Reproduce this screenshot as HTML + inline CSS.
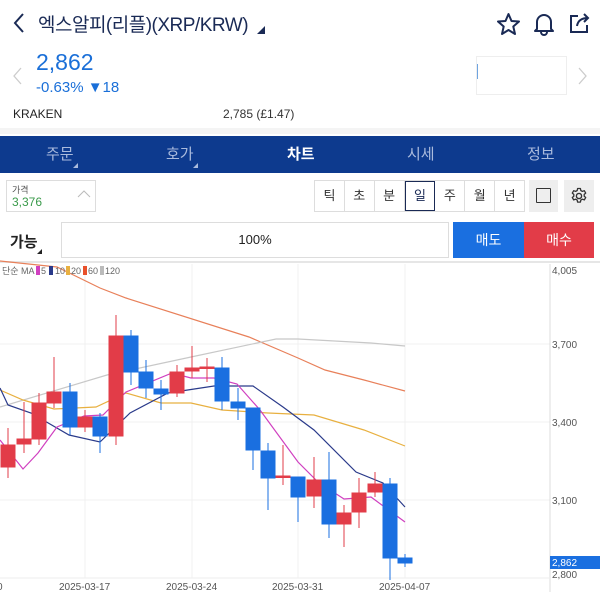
<!DOCTYPE html>
<html><head><meta charset="utf-8"><style>
*{margin:0;padding:0;box-sizing:border-box}
body{width:600px;height:592px;overflow:hidden;background:#fff;font-family:"Liberation Sans","Noto Sans CJK KR",sans-serif;position:relative;color:#222}
.a{position:absolute}
</style></head><body>
<svg class="a" style="left:12px;top:12px" width="14" height="22"><path d="M11 2 L3 11 L11 20" stroke="#1a2a55" stroke-width="2" fill="none"/></svg>
<div class="a" style="left:38px;top:10px;font-size:19px;color:#1a2a55;letter-spacing:-0.5px">엑스알피(리플)(XRP/KRW)</div>
<div class="a" style="left:257px;top:26px;width:0;height:0;border-left:8px solid transparent;border-bottom:8px solid #1a2a55"></div>
<svg class="a" style="left:496px;top:12px" width="26" height="24"><path d="M12.5 2 L15.5 9 L23 9.5 L17.3 14.5 L19 22 L12.5 18 L6 22 L7.7 14.5 L2 9.5 L9.5 9 Z" stroke="#1a2a55" stroke-width="2" fill="none" stroke-linejoin="round"/></svg>
<svg class="a" style="left:532px;top:11px" width="24" height="26"><path d="M5 18 V11 A7 7 0 0 1 19 11 V18 L21 20 H3 Z M9 21 A3 3 0 0 0 15 21" stroke="#1a2a55" stroke-width="2" fill="none" stroke-linejoin="round"/></svg>
<svg class="a" style="left:568px;top:11px" width="24" height="24"><path d="M10 5 H3 V21 H19 V14" stroke="#1a2a55" stroke-width="2" fill="none"/><path d="M9 15 C10 9 14 7 20 7 M16 3 L20 7 L16 11" stroke="#1a2a55" stroke-width="2" fill="none"/></svg>
<svg class="a" style="left:12px;top:67px" width="10" height="18"><path d="M9 1 L2 9 L9 17" stroke="#ccc" stroke-width="1.3" fill="none"/></svg>
<div class="a" style="left:36px;top:49px;font-size:23px;color:#1a6fd8">2,862</div>
<div class="a" style="left:36px;top:79px;font-size:15px;color:#1a6fd8">-0.63% ▼18</div>
<div class="a" style="left:476px;top:56px;width:91px;height:39px;border:1px solid #eee"></div>
<div class="a" style="left:477px;top:64px;width:1px;height:15px;background:#6fa4e0"></div>
<svg class="a" style="left:578px;top:67px" width="10" height="18"><path d="M1 1 L8 9 L1 17" stroke="#ccc" stroke-width="1.3" fill="none"/></svg>
<div class="a" style="left:13px;top:107px;font-size:12px;color:#222">KRAKEN</div>
<div class="a" style="left:223px;top:107px;font-size:12px;color:#333">2,785 (£1.47)</div>
<div class="a" style="left:0;top:128px;width:600px;height:6px;background:#f4f4f4"></div>
<div class="a" style="left:0;top:136px;width:600px;height:37px;background:#0d3a8e"></div>
<div class="a" style="left:0;top:143px;width:600px;font-size:15px;color:#aabbdd">
<span class="a" style="left:46px">주문</span><span class="a" style="left:166px">호가</span><span class="a" style="left:287px;color:#fff;font-weight:bold">차트</span><span class="a" style="left:407px">시세</span><span class="a" style="left:527px">정보</span></div>
<div class="a" style="left:73px;top:163px;border-left:5px solid transparent;border-bottom:5px solid #aabbdd"></div>
<div class="a" style="left:193px;top:163px;border-left:5px solid transparent;border-bottom:5px solid #aabbdd"></div>
<div class="a" style="left:6px;top:180px;width:90px;height:32px;border:1px solid #ddd"></div>
<div class="a" style="left:12px;top:183px;font-size:9px;color:#555">가격</div>
<div class="a" style="left:12px;top:195px;font-size:12px;color:#3a9a4a">3,376</div>
<svg class="a" style="left:77px;top:189px" width="14" height="10"><path d="M1 8 L7 2 L13 8" stroke="#bbb" stroke-width="1" fill="none"/></svg>
<div class="a" style="left:314px;top:180px;width:211px;height:32px;border:1px solid #ddd;display:flex;font-size:13px;color:#333">
<div style="flex:1;text-align:center;line-height:30px;border-right:1px solid #ddd">틱</div><div style="flex:1;text-align:center;line-height:30px;border-right:1px solid #ddd">초</div><div style="flex:1;text-align:center;line-height:30px;border-right:1px solid #ddd">분</div><div style="flex:1;text-align:center;line-height:28px;border:1px solid #1a2a55;color:#1a2a55">일</div><div style="flex:1;text-align:center;line-height:30px;border-right:1px solid #ddd">주</div><div style="flex:1;text-align:center;line-height:30px;border-right:1px solid #ddd">월</div><div style="flex:1;text-align:center;line-height:30px">년</div></div>
<div class="a" style="left:529px;top:180px;width:29px;height:32px;background:#eee"></div>
<div class="a" style="left:536px;top:188px;width:15px;height:15px;border:1.5px solid #333;border-radius:1px"></div>
<div class="a" style="left:564px;top:180px;width:30px;height:32px;background:#eee"></div>
<svg class="a" style="left:570px;top:187px" width="18" height="18" viewBox="0 0 18 18"><circle cx="9" cy="9" r="2.6" stroke="#333" stroke-width="1.4" fill="none"/><path d="M7.6 1.5h2.8l.4 2 1.6.9 1.9-.7 1.4 2.4-1.5 1.3v1.8l1.5 1.3-1.4 2.4-1.9-.7-1.6.9-.4 2H7.6l-.4-2-1.6-.9-1.900.7-1.4-2.4 1.5-1.3V7.4L2.3 6.1l1.4-2.4 1.9.7 1.6-.9z" stroke="#333" stroke-width="1.3" fill="none" stroke-linejoin="round"/></svg>
<div class="a" style="left:10px;top:231px;font-size:15px;color:#222;font-weight:bold">가능</div>
<div class="a" style="left:37px;top:249px;border-left:5px solid transparent;border-bottom:5px solid #222"></div>
<div class="a" style="left:61px;top:222px;width:388px;height:36px;border:1px solid #ddd;text-align:center;line-height:34px;font-size:13px;color:#222">100%</div>
<div class="a" style="left:453px;top:222px;width:71px;height:36px;background:#1a6fe0;color:#fff;text-align:center;line-height:36px;font-size:14px">매도</div>
<div class="a" style="left:524px;top:222px;width:70px;height:36px;background:#e23c48;color:#fff;text-align:center;line-height:36px;font-size:14px">매수</div>
<div class="a" style="left:0;top:261px;width:600px;height:2px;background:#e6e6e6"></div>
<svg class="a" style="left:0;top:0" width="600" height="592">
<g stroke="#f0f0f0" stroke-width="1"><line x1="85" y1="264" x2="85" y2="578"/><line x1="192" y1="264" x2="192" y2="578"/><line x1="298" y1="264" x2="298" y2="578"/><line x1="405" y1="264" x2="405" y2="578"/><line x1="0" y1="344" x2="550" y2="344"/><line x1="0" y1="422" x2="550" y2="422"/><line x1="0" y1="500" x2="550" y2="500"/></g>
<line x1="550" y1="264" x2="550" y2="592" stroke="#ddd"/>
<line x1="0" y1="578" x2="550" y2="578" stroke="#eee"/>
<g fill="none" stroke-width="1.2">
<polyline stroke="#e8805a" points="0,261 57,267 100,288 126,298 249,337 298,358 325,370 364,380 405,391"/>
<polyline stroke="#c8c8c8" points="0,407 107,375 191,357 276,339 298,339 371,343 405,346"/>
<polyline stroke="#e8b040" points="0,390 23,400 54,409 96,407 126,393 161,403 191,403 222,410 268,413 314,415 364,430 405,446"/>
<polyline stroke="#2a3a8a" points="0,388 8,405 31,413 69,435 100,442 130,413 168,393 214,386 253,386 283,407 314,430 356,472 383,483 405,507"/>
<polyline stroke="#d040c0" points="0,440 23,469 38,453 57,427 84,416 103,415 126,392 172,373 191,378 214,378 237,384 260,410 298,462 318,482 344,499 371,497 405,522"/>
</g>
<g stroke-width="1">
<g stroke="#e23c48" fill="#e23c48">
<line x1="8" y1="428" x2="8" y2="478"/><rect x="1" y="445" width="14" height="22"/>
<line x1="24" y1="402" x2="24" y2="453"/><rect x="17" y="439" width="14" height="5"/>
<line x1="39" y1="393" x2="39" y2="445"/><rect x="32" y="403" width="14" height="36"/>
<line x1="54" y1="357" x2="54" y2="408"/><rect x="47" y="392" width="14" height="11"/>
<line x1="85" y1="410" x2="85" y2="432"/><rect x="78" y="417" width="14" height="10"/>
<line x1="116" y1="315" x2="116" y2="445"/><rect x="109" y="336" width="14" height="100"/>
<line x1="177" y1="365" x2="177" y2="397"/><rect x="170" y="372" width="14" height="21"/>
<line x1="192" y1="346" x2="192" y2="378"/><rect x="185" y="368" width="14" height="3"/>
<line x1="207" y1="358" x2="207" y2="382"/><rect x="200" y="367" width="14" height="1.5"/>
<line x1="283" y1="445" x2="283" y2="485"/><rect x="276" y="476" width="14" height="1.5"/>
<line x1="314" y1="457" x2="314" y2="508"/><rect x="307" y="480" width="14" height="16"/>
<line x1="344" y1="505" x2="344" y2="547"/><rect x="337" y="513" width="14" height="11"/>
<line x1="359" y1="478" x2="359" y2="528"/><rect x="352" y="493" width="14" height="19"/>
<line x1="375" y1="472" x2="375" y2="497"/><rect x="368" y="484" width="14" height="8"/>
</g>
<g stroke="#1a6fe0" fill="#1a6fe0">
<line x1="70" y1="383" x2="70" y2="435"/><rect x="63" y="392" width="14" height="35"/>
<line x1="100" y1="413" x2="100" y2="453"/><rect x="93" y="417" width="14" height="19"/>
<line x1="131" y1="330" x2="131" y2="385"/><rect x="124" y="336" width="14" height="36"/>
<line x1="146" y1="360" x2="146" y2="398"/><rect x="139" y="372" width="14" height="16"/>
<line x1="161" y1="380" x2="161" y2="410"/><rect x="154" y="389" width="14" height="5"/>
<line x1="222" y1="357" x2="222" y2="410"/><rect x="215" y="368" width="14" height="33"/>
<line x1="238" y1="388" x2="238" y2="420"/><rect x="231" y="402" width="14" height="6"/>
<line x1="253" y1="408" x2="253" y2="470"/><rect x="246" y="408" width="14" height="42"/>
<line x1="268" y1="443" x2="268" y2="510"/><rect x="261" y="451" width="14" height="27"/>
<line x1="298" y1="477" x2="298" y2="522"/><rect x="291" y="477" width="14" height="20"/>
<line x1="329" y1="452" x2="329" y2="538"/><rect x="322" y="480" width="14" height="44"/>
<line x1="390" y1="478" x2="390" y2="580"/><rect x="383" y="484" width="14" height="74"/>
<line x1="405" y1="554" x2="405" y2="567"/><rect x="398" y="558" width="14" height="5"/>
</g></g>
<g font-size="10" fill="#555" font-family="Liberation Sans, sans-serif">
<text x="552" y="274">4,005</text><text x="552" y="348">3,700</text><text x="552" y="426">3,400</text><text x="552" y="504">3,100</text><text x="552" y="578">2,800</text>
<text x="59" y="590">2025-03-17</text><text x="166" y="590">2025-03-24</text><text x="272" y="590">2025-03-31</text><text x="379" y="590">2025-04-07</text><text x="-3" y="590">0</text>
</g>
<rect x="550" y="556" width="50" height="13" fill="#1a6fe0"/><text x="552" y="566" font-size="10" fill="#fff" font-family="Liberation Sans, sans-serif">2,862</text>
<g font-size="9" font-family="Liberation Sans, Noto Sans CJK KR, sans-serif" fill="#666"><text x="2" y="274">단순 MA</text>
<rect x="36" y="266" width="4" height="9" fill="#d040c0"/><text x="41" y="274">5</text>
<rect x="49" y="266" width="4" height="9" fill="#2a3a8a"/><text x="55" y="274">10</text>
<rect x="66" y="266" width="4" height="9" fill="#e8b040"/><text x="71" y="274">20</text>
<rect x="83" y="266" width="4" height="9" fill="#e8502a"/><text x="88" y="274">60</text>
<rect x="100" y="266" width="4" height="9" fill="#bbb"/><text x="105" y="274">120</text></g>
</svg>
</body></html>
